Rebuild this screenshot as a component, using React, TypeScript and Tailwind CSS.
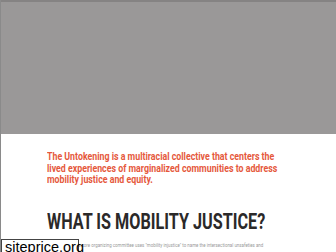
export default function App() {
  const orange = "origin-left scale-x-[0.88] whitespace-nowrap text-[#e5583c] font-bold text-[10px] leading-[11.5px] font-['Roboto',sans-serif]";
  return (
    <div className="relative w-[336px] h-[252px] overflow-hidden bg-white border-l border-[#8a8a8a]">
      <div className="h-[134px] bg-[#9a9898] border-t-2 border-[#858383]" />
      <div className="flex flex-col pl-[46px] pt-[17px]">
        <div className={orange}>The Untokening is a multiracial collective that centers the</div>
        <div className={orange}>lived experiences of marginalized communities to address</div>
        <div className={orange}>mobility justice and equity.</div>
        <h2 className="mt-[24px] origin-left scale-x-[0.72] whitespace-nowrap text-[#2b2929] font-bold text-[22.5px] leading-[22px] font-['Roboto',sans-serif]">
          WHAT IS MOBILITY JUSTICE?
        </h2>
        <p className="mt-[9px] origin-left scale-x-[0.8] whitespace-nowrap text-[#9a9a9a] text-[5.5px] leading-[8px] font-['Roboto',sans-serif]">
          The Untokening's core organizing committee uses "mobility injustice" to name the intersectional unsafeties and
        </p>
      </div>
      <div className="absolute left-0 top-[239px] h-[16px] w-[78px] bg-white border border-[#444] text-black text-[14.5px] leading-[14px] pl-[3px] whitespace-nowrap font-['Liberation_Sans',sans-serif]">
        siteprice.org
      </div>
    </div>
  );
}
